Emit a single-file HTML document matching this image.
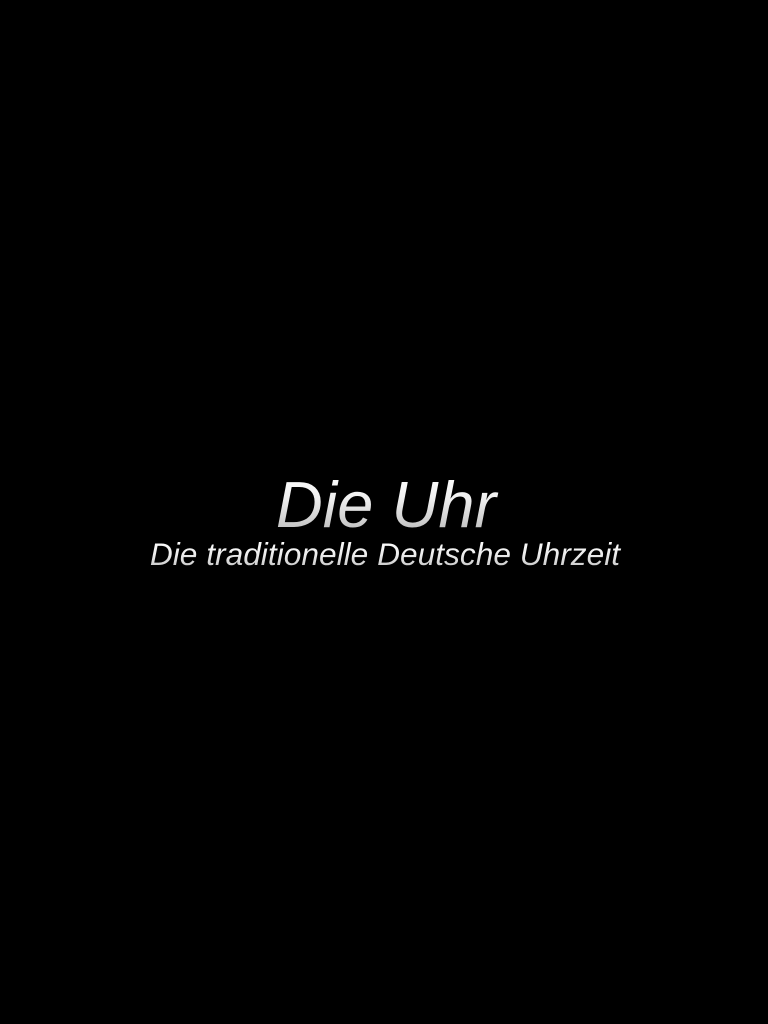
<!DOCTYPE html>
<html><head><meta charset="utf-8"><style>
html,body{margin:0;padding:0;background:#000;width:768px;height:1024px;overflow:hidden}
.t{position:absolute;left:0;width:768px;text-align:center;font-family:"Liberation Sans",Arial,sans-serif;font-style:italic;white-space:nowrap;
background:linear-gradient(#ffffff,#f0f0f0 40%,#b8b8b8);-webkit-background-clip:text;background-clip:text;color:transparent}
.a{font-size:65px;line-height:65px;top:472px;left:2px}
.b{font-size:31.7px;line-height:32px;top:538px;left:1px;background:linear-gradient(#ffffff,#eeeeee 50%,#c0c0c0);-webkit-background-clip:text;background-clip:text}
</style></head><body>
<div class="t a">Die Uhr</div>
<div class="t b">Die traditionelle Deutsche Uhrzeit</div>
</body></html>
